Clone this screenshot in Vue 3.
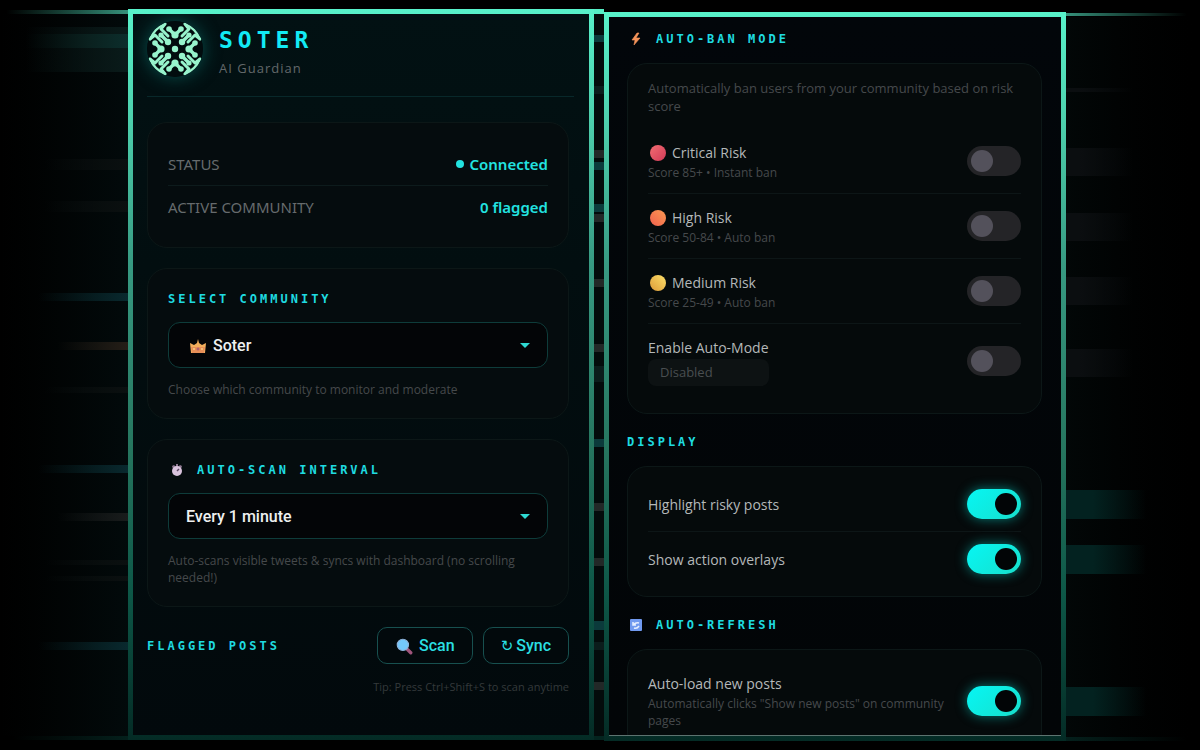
<script setup>
import { reactive, ref } from "vue";

const community = ref("soter");
const interval = ref("1");

// risk levels for auto ban
const risks = reactive([
  { id: "critical", name: "Critical Risk", note: "Score 85+ • Instant ban", on: false },
  { id: "high", name: "High Risk", note: "Score 50-84 • Auto ban", on: false },
  { id: "medium", name: "Medium Risk", note: "Score 25-49 • Auto ban", on: false },
]);
const autoMode = ref(false);

const display = reactive([
  { id: "highlight", name: "Highlight risky posts", on: true },
  { id: "overlays", name: "Show action overlays", on: true },
]);
const autoLoad = ref(true);

// light streaks behind the panels
const leftStreaks = [
  { y: 27, h: 7, kind: "mist" },
  { y: 34, h: 14, kind: "glow" },
  { y: 48, h: 12, kind: "mist" },
  { y: 60, h: 12, kind: "mist" },
  { y: 159, h: 11, kind: "faint" },
  { y: 201, h: 11, kind: "faint" },
  { y: 293, h: 8, kind: "teal" },
  { y: 342, h: 8, kind: "amber" },
  { y: 387, h: 6, kind: "faint" },
  { y: 465, h: 8, kind: "teal" },
  { y: 513, h: 8, kind: "grey" },
  { y: 560, h: 5, kind: "faint" },
  { y: 576, h: 5, kind: "faint" },
  { y: 642, h: 8, kind: "teal" },
];
const gapStreaks = [
  { y: 35, h: 7, kind: "teal" },
  { y: 86, h: 8, kind: "mist" },
  { y: 150, h: 8, kind: "grey" },
  { y: 162, h: 8, kind: "teal" },
  { y: 204, h: 8, kind: "teal" },
  { y: 214, h: 8, kind: "grey" },
  { y: 279, h: 8, kind: "grey" },
  { y: 344, h: 8, kind: "grey" },
  { y: 366, h: 16, kind: "mist" },
  { y: 439, h: 8, kind: "teal" },
  { y: 503, h: 8, kind: "grey" },
  { y: 558, h: 8, kind: "grey" },
  { y: 621, h: 9, kind: "teal" },
  { y: 642, h: 8, kind: "mist" },
  { y: 682, h: 8, kind: "grey" },
];
const rightStreaks = [
  { y: 88, h: 4, kind: "grey" },
  { y: 148, h: 28, kind: "grey" },
  { y: 213, h: 28, kind: "grey" },
  { y: 277, h: 28, kind: "grey" },
  { y: 349, h: 28, kind: "grey" },
  { y: 490, h: 29, kind: "teal" },
  { y: 545, h: 29, kind: "teal" },
  { y: 687, h: 29, kind: "teal" },
];
</script>

<template>
  <main class="page">
    <svg class="streaks" aria-hidden="true">
      <defs>
        <linearGradient id="l-line"><stop offset="0.05" stop-color="#2d8872" stop-opacity="0" /><stop offset="1" stop-color="#36917b" /></linearGradient>
        <linearGradient id="l-base"><stop offset="0.1" stop-color="#04201c" stop-opacity="0" /><stop offset="1" stop-color="#04201c" /></linearGradient>
        <linearGradient id="l-bg"><stop offset="0" stop-color="#020707" stop-opacity="0" /><stop offset="1" stop-color="#020a0b" /></linearGradient>
        <linearGradient id="l-teal"><stop offset="0.3" stop-color="#09292e" stop-opacity="0" /><stop offset="1" stop-color="#09292e" /></linearGradient>
        <linearGradient id="l-glow"><stop offset="0.2" stop-color="#0a211f" stop-opacity="0" /><stop offset="0.7" stop-color="#0a211f" /><stop offset="1" stop-color="#0c2e2c" /></linearGradient>
        <linearGradient id="l-mist"><stop offset="0.2" stop-color="#0a1b1a" stop-opacity="0" /><stop offset="1" stop-color="#0a1b1a" /></linearGradient>
        <linearGradient id="l-grey"><stop offset="0.45" stop-color="#191c1c" stop-opacity="0" /><stop offset="1" stop-color="#191c1c" /></linearGradient>
        <linearGradient id="l-amber"><stop offset="0.45" stop-color="#251e17" stop-opacity="0" /><stop offset="1" stop-color="#251e17" /></linearGradient>
        <linearGradient id="l-faint"><stop offset="0.35" stop-color="#0b1010" stop-opacity="0" /><stop offset="1" stop-color="#0b1010" /></linearGradient>
      </defs>
      <rect y="14" width="100%" height="722" fill="url(#l-bg)" />
      <rect v-for="s in leftStreaks" :key="s.y" :y="s.y" width="100%" :height="s.h" :fill="`url(#l-${s.kind})`" />
      <rect y="10" width="100%" height="4" fill="url(#l-line)" />
      <rect y="736" width="100%" height="4" fill="url(#l-base)" />
    </svg>

    <div class="frame left">
      <div class="panel">
        <header class="brand">
          <svg class="logo" viewBox="-28 -28 56 56" aria-hidden="true">
            <circle r="28" fill="#020c0e" />
            <g fill="none" stroke="#97f3cc" stroke-linecap="round" stroke-linejoin="round">
              <g v-for="a in [0, 90, 180, 270]" :key="a" :transform="`rotate(${a})`">
                <path d="M-25 -10A27 27 0 0 1 -10 -25" stroke-width="2.6" />
                <path d="M-25 -10L-20 -14L-13 -7M-10 -25L-14 -20L-7 -13" stroke-width="3" />
                <path d="M-13 -13L-7 -7M-20 -6L-14 0L-20 6" stroke-width="3.4" />
              </g>
            </g>
            <g fill="#97f3cc">
              <circle r="3.2" />
              <g v-for="a in [0, 90, 180, 270]" :key="a" :transform="`rotate(${a})`">
                <circle cx="-7" cy="-7" r="3.2" />
                <circle cx="-14" cy="-14" r="2.6" />
                <circle cx="-20" cy="-6" r="2.8" />
                <circle cx="-20" cy="6" r="2.8" />
                <circle cx="-14" cy="0" r="3.6" />
              </g>
            </g>
          </svg>
          <div>
            <h1 class="name">SOTER</h1>
            <p class="tagline">AI Guardian</p>
          </div>
        </header>

        <dl class="card status">
          <div class="status-row">
            <dt>STATUS</dt>
            <dd><i class="dot"></i>Connected</dd>
          </div>
          <div class="status-row">
            <dt>ACTIVE COMMUNITY</dt>
            <dd>0 flagged</dd>
          </div>
        </dl>

        <section class="card">
          <label class="title" for="community">SELECT COMMUNITY</label>
          <div class="picker">
            <svg class="crown" viewBox="0 0 18 16" aria-hidden="true">
              <path d="M1 5l4 2 3-2 1-4 1 4 3 2 4-2-1 10H2z" fill="#f2ae5c" />
              <path d="M2 9h14l-1 6H3z" fill="#e78f58" />
              <circle cx="9" cy="11" r="1.5" fill="#b0626c" />
              <circle cx="5" cy="11" r="1" fill="#f8cf82" />
              <circle cx="13" cy="11" r="1" fill="#f8cf82" />
            </svg>
            <select id="community" v-model="community" class="with-icon">
              <option value="soter">Soter</option>
            </select>
            <svg class="caret" viewBox="0 0 10 6" aria-hidden="true"><path d="M0 0h10L5 5z" fill="#2ed9d2" /></svg>
          </div>
          <p class="hint">Choose which community to monitor and moderate</p>
        </section>

        <section class="card">
          <label class="title" for="interval">
            <svg class="title-icon" viewBox="0 0 18 16" aria-hidden="true">
              <path d="M8 2h2v3H8zM4 4l2-1 2 2-3 2zM14 4l-2-1-2 2 3 2z" fill="#8e7891" />
              <circle cx="9" cy="9" r="5" fill="#d9c3dc" />
              <path d="M9 9l2-2" stroke="#5b4660" stroke-width="1.5" />
            </svg>
            AUTO-SCAN INTERVAL
          </label>
          <div class="picker">
            <select id="interval" v-model="interval">
              <option value="1">Every 1 minute</option>
            </select>
            <svg class="caret" viewBox="0 0 10 6" aria-hidden="true"><path d="M0 0h10L5 5z" fill="#2ed9d2" /></svg>
          </div>
          <p class="hint">Auto-scans visible tweets &amp; syncs with dashboard (no scrolling needed!)</p>
        </section>

        <section class="flagged">
          <h2 class="title">FLAGGED POSTS</h2>
          <div class="actions">
            <button type="button">
              <svg class="lens" viewBox="0 0 16 16" aria-hidden="true">
                <path d="M9 9l5 5" stroke="#a0557c" stroke-width="3" stroke-linecap="round" />
                <circle cx="7" cy="7" r="5" fill="#74c8fb" stroke="#8fb4dc" stroke-width="1" />
              </svg>
              Scan
            </button>
            <button type="button"><span class="sync-mark">↻</span>Sync</button>
          </div>
        </section>
        <p class="tip">Tip: Press Ctrl+Shift+S to scan anytime</p>
      </div>
    </div>

    <svg class="streaks" aria-hidden="true">
      <rect y="14" width="100%" height="722" fill="#030b0b" />
      <rect v-for="s in gapStreaks" :key="s.y" :y="s.y" width="100%" :height="s.h" :class="s.kind" />
      <rect y="9" width="100%" height="5" fill="#55edc5" />
      <rect y="736" width="100%" height="4" fill="#04241f" />
    </svg>

    <div class="frame right">
      <div class="panel">
        <h2 class="title">
          <svg class="title-icon" viewBox="0 0 18 16" aria-hidden="true">
            <path d="M10 2L5 9h3l-1 5 6-7H9l3-5z" fill="#f5935a" stroke="#f5935a" stroke-width="0.6" />
          </svg>
          AUTO-BAN MODE
        </h2>
        <section class="card ban">
          <p class="intro">Automatically ban users from your community based on risk score</p>
          <div v-for="risk in risks" :key="risk.id" class="row">
            <div>
              <label class="row-name" :for="risk.id"><i class="ball" :class="risk.id"></i>{{ risk.name }}</label>
              <p class="note">{{ risk.note }}</p>
            </div>
            <input :id="risk.id" v-model="risk.on" type="checkbox" class="toggle" />
          </div>
          <div class="row">
            <div>
              <label class="row-name" for="auto-mode">Enable Auto-Mode</label>
              <p class="badge">{{ autoMode ? "Enabled" : "Disabled" }}</p>
            </div>
            <input id="auto-mode" v-model="autoMode" type="checkbox" class="toggle" />
          </div>
        </section>

        <h2 class="title">DISPLAY</h2>
        <section class="card compact">
          <div v-for="item in display" :key="item.id" class="row">
            <label class="row-name" :for="item.id">{{ item.name }}</label>
            <input :id="item.id" v-model="item.on" type="checkbox" class="toggle" />
          </div>
        </section>

        <h2 class="title">
          <svg class="title-icon" viewBox="0 0 18 16" aria-hidden="true">
            <rect x="3" y="2" width="12" height="12" rx="1" fill="#719af0" />
            <path d="M6 5v3h3M6 8q3-3 6-2M12 9q-2 3-5 2" fill="none" stroke="#e6efff" stroke-width="1.5" />
          </svg>
          AUTO-REFRESH
        </h2>
        <section class="card compact">
          <div class="row">
            <div>
              <label class="row-name" for="auto-load">Auto-load new posts</label>
              <p class="note">Automatically clicks "Show new posts" on community pages</p>
            </div>
            <input id="auto-load" v-model="autoLoad" type="checkbox" class="toggle" />
          </div>
        </section>
      </div>
    </div>

    <svg class="streaks" aria-hidden="true">
      <defs>
        <linearGradient id="r-line"><stop offset="0" stop-color="#36917b" /><stop offset="0.9" stop-color="#2d8872" stop-opacity="0" /></linearGradient>
        <linearGradient id="r-base"><stop offset="0" stop-color="#04201c" /><stop offset="0.9" stop-color="#04201c" stop-opacity="0" /></linearGradient>
        <linearGradient id="r-bg"><stop offset="0" stop-color="#020707" /><stop offset="0.95" stop-color="#010202" stop-opacity="0" /></linearGradient>
        <linearGradient id="r-grey"><stop offset="0.1" stop-color="#0b0e10" /><stop offset="0.5" stop-color="#0b0e10" stop-opacity="0" /></linearGradient>
        <linearGradient id="r-teal"><stop offset="0.2" stop-color="#032220" /><stop offset="0.6" stop-color="#032220" stop-opacity="0" /></linearGradient>
      </defs>
      <rect y="17" width="100%" height="720" fill="url(#r-bg)" />
      <rect v-for="s in rightStreaks" :key="s.y" :y="s.y" width="100%" :height="s.h" :fill="`url(#r-${s.kind})`" />
      <rect y="13" width="100%" height="3" fill="url(#r-line)" />
      <rect y="737" width="100%" height="4" fill="url(#r-base)" />
    </svg>
  </main>
</template>

<style>
body {
  margin: 0;
  background: #000;
}
</style>

<style scoped>
.page {
  display: grid;
  grid-template-columns: 128px minmax(0, 466fr) 10px minmax(0, 462fr) 134px;
  height: 100vh;
  color: #b4b8b9;
  font-family: "Open Sans", "Noto Sans", sans-serif;
}
.page * {
  box-sizing: border-box;
}
h1,
h2,
p,
dl,
dd {
  margin: 0;
}

.streaks {
  width: 100%;
  height: 100%;
}
.teal {
  fill: #0b3a3b;
}
.grey {
  fill: #222827;
}
.mist {
  fill: #0b1c1b;
}

/* glowing frame */
.frame {
  display: flex;
  padding: 5px;
  min-height: 0;
  background: linear-gradient(#58f2ca, #4dd0ad 15%, #379a82 35%, #26765f 60%, #0d5747 80%, #042b25);
}
.left {
  margin: 9px 0 10px;
}
.right {
  margin: 12px 0 9px;
}
.panel {
  flex: 1;
  min-width: 0;
  overflow: hidden;
}
.left .panel {
  padding: 7px 20px 0 14px;
  background: linear-gradient(#021113, #020e10 35%, #02090c);
}
.right .panel {
  padding: 12px 19px 0 18px;
  border-bottom: 1px solid #5d7370;
  background: linear-gradient(#02060a, #020507);
}

/* header */
.brand {
  display: flex;
  align-items: center;
  gap: 16px;
  margin-right: -5px;
  margin-bottom: 25px;
  padding-bottom: 19px;
  border-bottom: 1px solid #08282a;
}
.logo {
  width: 56px;
  height: 56px;
  border-radius: 50%;
  box-shadow: 0 0 18px #07504d;
}
.name {
  padding: 5px 0;
  color: #12eaf5;
  font: bold 23px/28px "DejaVu Sans Mono", monospace;
  letter-spacing: 5px;
}
.tagline {
  color: #62686a;
  font-size: 13px;
  line-height: 18px;
  letter-spacing: 1px;
}

/* cards */
.card {
  margin-bottom: 20px;
  padding: 20px;
  border: 1px solid #0c1717;
  border-radius: 20px;
  background: #050c0e;
}
.right .card {
  margin-bottom: 18px;
  background: #050a0b;
}
.right .ban {
  padding: 15px 20px;
}
.right .compact {
  padding: 10px 20px;
}
.title {
  display: flex;
  align-items: center;
  height: 20px;
  margin-bottom: 14px;
  color: #1fdbe0;
  font: bold 12px/20px "DejaVu Sans Mono", monospace;
  letter-spacing: 3px;
}
.left .title {
  margin-bottom: 13px;
}
.title-icon {
  width: 18px;
  height: 16px;
  margin-right: 11px;
}

.status {
  font-family: "Noto Sans", sans-serif;
}
.status-row {
  display: flex;
  justify-content: space-between;
  align-items: center;
  height: 42px;
}
.status-row + .status-row {
  border-top: 1px solid #0d1b1c;
}
dt {
  color: #666b6d;
  font-size: 15px;
}
dd {
  display: flex;
  align-items: center;
  color: #22e3e0;
  font-size: 15px;
  font-weight: 600;
}
.dot {
  width: 8px;
  height: 8px;
  margin-right: 5px;
  border-radius: 50%;
  background: currentColor;
}

.picker {
  position: relative;
}
.picker select {
  display: block;
  width: 100%;
  height: 46px;
  padding: 0 40px 0 17px;
  border: 1px solid #0e3c3a;
  border-radius: 12px;
  background: #030507;
  color: #eef0f0;
  font: 500 16px Roboto, sans-serif;
  appearance: none;
}
.picker .with-icon {
  padding-left: 44px;
}
.crown {
  position: absolute;
  left: 21px;
  top: 16px;
  width: 18px;
  height: 16px;
}
.caret {
  position: absolute;
  right: 18px;
  top: 21px;
  width: 10px;
  height: 6px;
}
.hint {
  margin-top: 13px;
  color: #45494b;
  font-size: 12px;
  line-height: 17px;
}

.flagged {
  display: flex;
  justify-content: space-between;
  align-items: center;
}
.flagged .title {
  margin: 0;
}
.actions {
  display: flex;
  gap: 10px;
}
.actions button {
  display: flex;
  align-items: center;
  height: 37px;
  padding: 0 17px;
  border: 1px solid #17504f;
  border-radius: 10px;
  background: #02090c;
  color: #2adfe2;
  font: 500 16px Roboto, sans-serif;
}
.lens {
  width: 18px;
  height: 18px;
  margin-right: 6px;
}
.sync-mark {
  margin-right: 3px;
  font-family: "DejaVu Sans", sans-serif;
  font-size: 15px;
}
.tip {
  margin-top: 14px;
  color: #34393b;
  font-size: 11px;
  line-height: 18px;
  text-align: right;
}

/* settings rows */
.intro {
  margin-bottom: 14px;
  color: #45494b;
  font-size: 13px;
  line-height: 18px;
}
.row {
  display: flex;
  justify-content: space-between;
  align-items: center;
  gap: 16px;
  padding: 12px 0;
}
.row:not(:last-child) {
  border-bottom: 1px solid #0d1617;
}
.row-name {
  display: flex;
  align-items: center;
  padding-top: 1px;
  font-size: 14px;
  line-height: 22px;
}
.note {
  color: #45494b;
  font-size: 12px;
  line-height: 17px;
}
.ball {
  width: 16px;
  height: 16px;
  margin: 0 6px 0 2px;
  border-radius: 50%;
}
.critical {
  background: linear-gradient(135deg, #f26d72, #d23a57);
}
.high {
  background: linear-gradient(225deg, #fb9a52, #f0604e);
}
.medium {
  background: linear-gradient(225deg, #fde06a, #dc9a38);
}
.badge {
  height: 27px;
  padding: 0 12px;
  border-radius: 8px;
  background: #0d1213;
  color: #494e50;
  font-size: 13px;
  line-height: 27px;
}
.toggle {
  flex: none;
  width: 54px;
  height: 30px;
  margin: 0;
  padding: 4px;
  border-radius: 15px;
  background: #242427;
  appearance: none;
}
.toggle::before {
  content: "";
  display: block;
  width: 22px;
  height: 22px;
  border-radius: 50%;
  background: #53515b;
}
.toggle:checked {
  background: linear-gradient(135deg, #06f6f4, #17dfcb);
  box-shadow: 0 0 12px #067a75;
}
.toggle:checked::before {
  margin-left: auto;
  background: #020506;
}
</style>
